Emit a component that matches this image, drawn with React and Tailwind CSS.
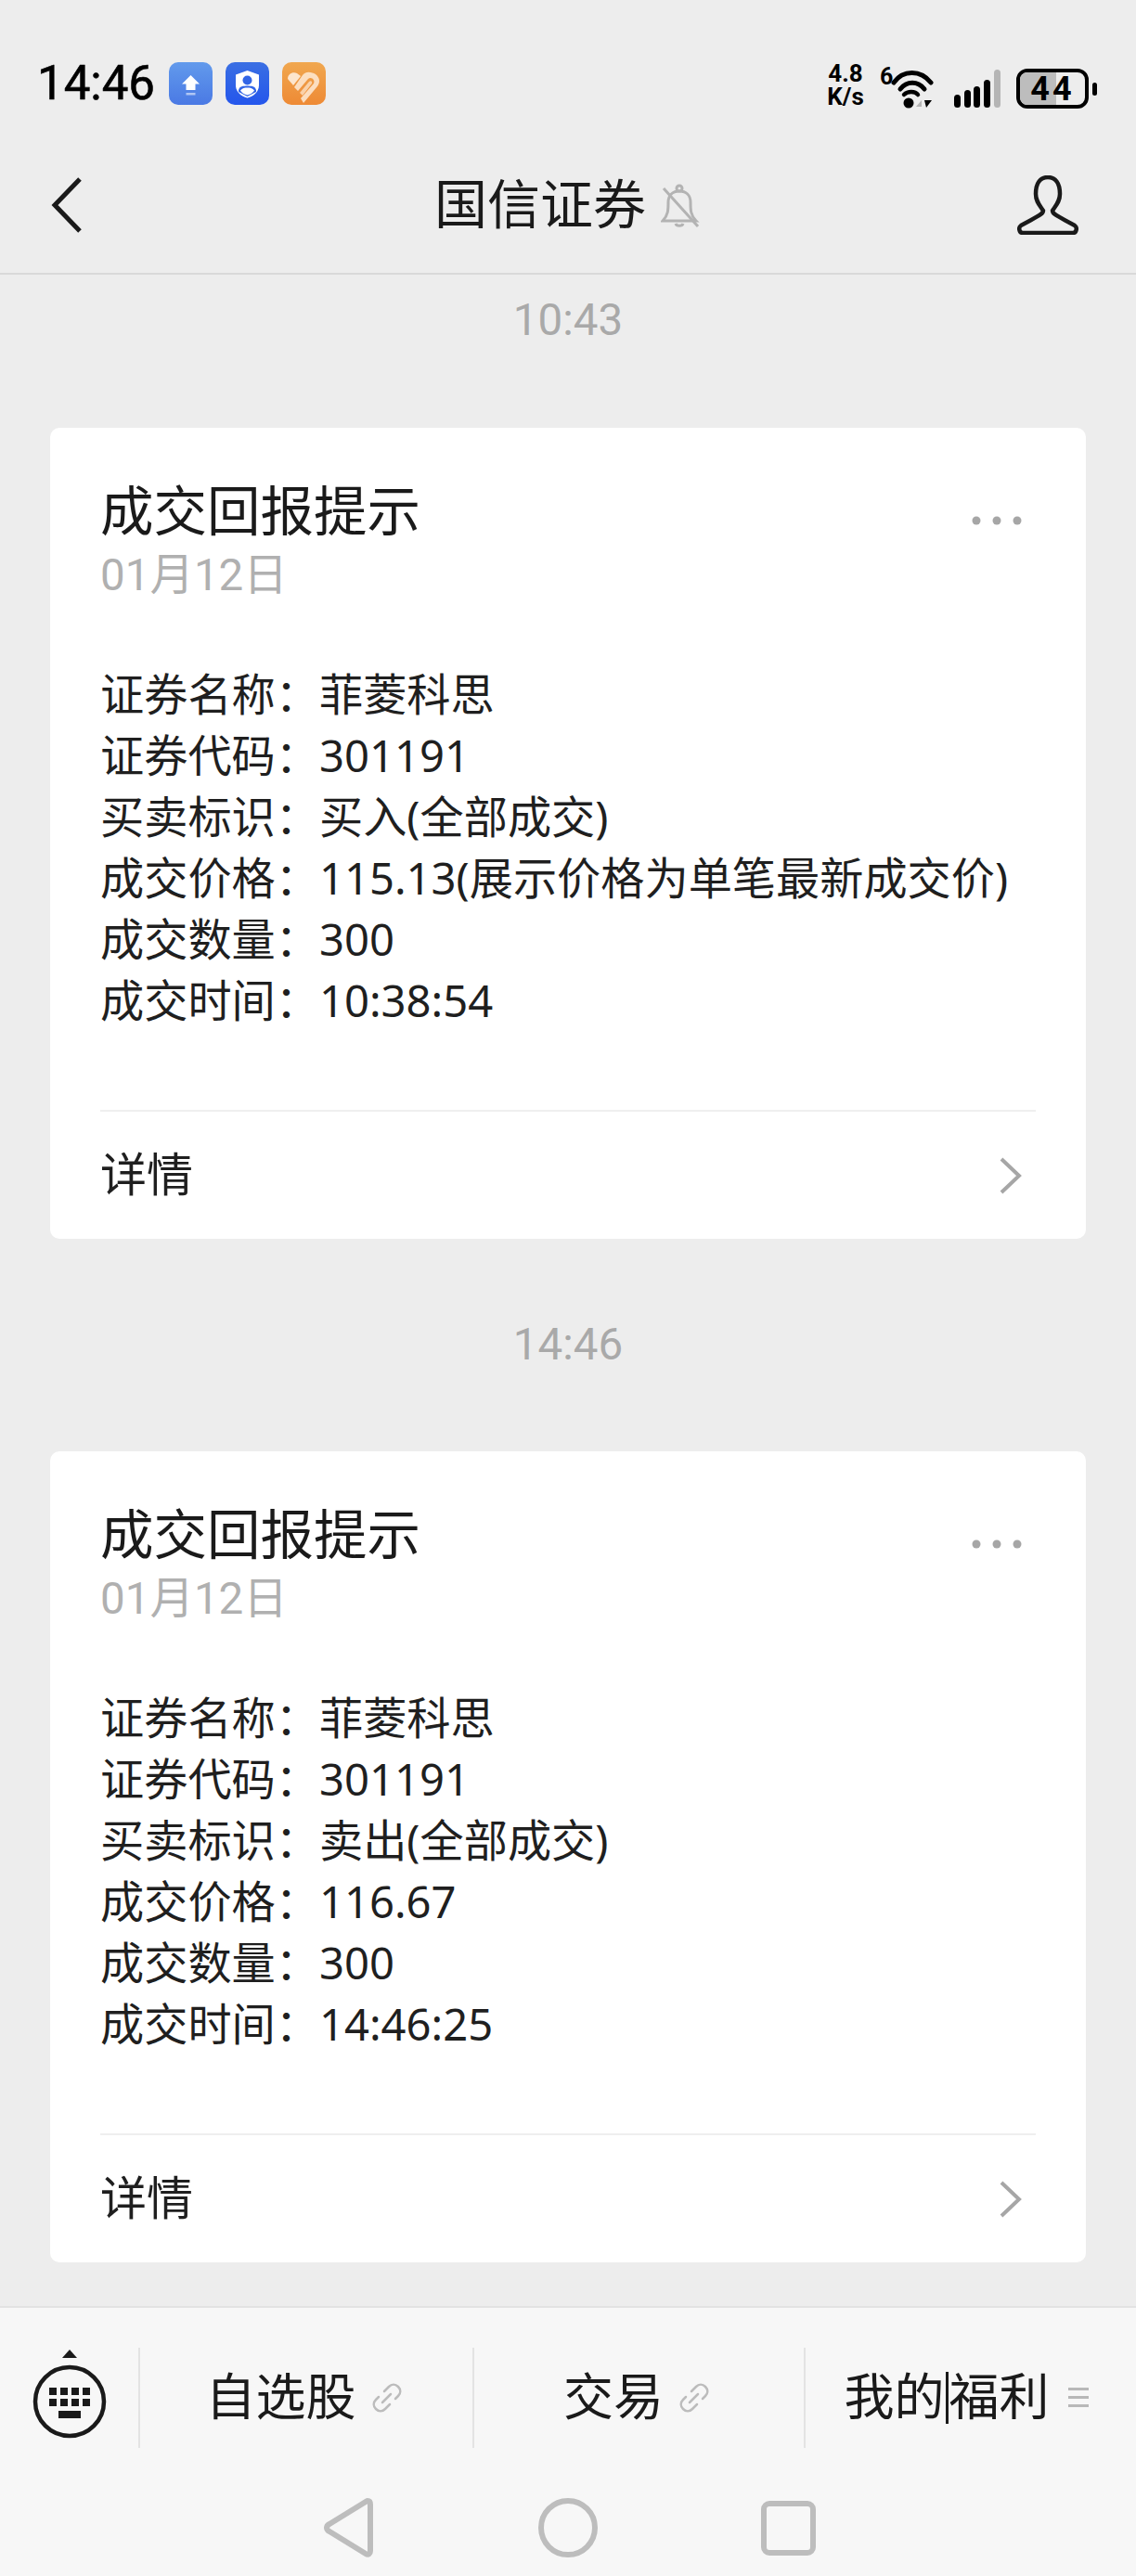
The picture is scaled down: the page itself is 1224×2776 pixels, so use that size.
import React from 'react'

const FONT = "font-['Roboto','Noto_Sans_CJK_SC',sans-serif]"

function UploadBadge() {
  return (
    <svg width="47" height="46" viewBox="0 0 47 46">
      <defs>
        <linearGradient id="up" x1="0" y1="0" x2="0" y2="1">
          <stop offset="0" stopColor="#629aec" />
          <stop offset="1" stopColor="#4a79e4" />
        </linearGradient>
      </defs>
      <rect width="47" height="46" rx="10" fill="url(#up)" />
      <path d="M23.5 14 L33 23.500 H28.500 V30 H18.500 V23.500 H14 Z" fill="#fff" />
      <rect x="18.500" y="33" width="10" height="2.500" fill="#fff" opacity="0.55" />
    </svg>
  )
}

function ShieldBadge() {
  return (
    <svg width="47" height="46" viewBox="0 0 47 46">
      <defs>
        <linearGradient id="sh" x1="0" y1="0" x2="0" y2="1">
          <stop offset="0" stopColor="#3a6fe3" />
          <stop offset="1" stopColor="#2456ec" />
        </linearGradient>
      </defs>
      <rect width="47" height="46" rx="10" fill="url(#sh)" />
      <path d="M23.500 9 L36 13.500 V25 C36 32 30 37 23.500 38.500 C17 37 11 32 11 25 V13.500 Z" fill="#fff" />
      <circle cx="23.500" cy="19.500" r="5" fill="#3265e6" />
      <path d="M14 30 C15 26 19 25.500 23.500 25.500 C28 25.500 32 26 33 30 L33 32 L23.500 37 L14 32 Z" fill="#3265e6" />
      <path d="M16 30.500 C18 28 20.500 27.500 23.500 27.500 C26.500 27.500 29 28 31 30.500 C29.500 33 26.500 34.800 23.500 35.400 C20.500 34.800 17.500 33 16 30.500 Z" fill="#fff" />
    </svg>
  )
}

function HeartBadge() {
  return (
    <svg width="47" height="46" viewBox="0 0 47 46">
      <defs>
        <linearGradient id="he" x1="0" y1="0" x2="0" y2="1">
          <stop offset="0" stopColor="#f0a74f" />
          <stop offset="1" stopColor="#ee8a35" />
        </linearGradient>
      </defs>
      <rect width="47" height="46" rx="10" fill="url(#he)" />
      <path d="M6 18 C6 12 12 10 16 12 L20 15 L12 25 Z" fill="#fde6cd" />
      <path d="M13 27 L22 14 C26 9 32 11 36 13 C41 17 41 22 38 26 L23 44 L20 39 L34 23 C36 19 31 15 28 18 L17 31 Z" fill="#fde6cd" opacity="0.9" />
      <path d="M19 33 L29 21 C31 19 33 21 32 23 L22 36 Z" fill="#fde6cd" opacity="0.75" />
    </svg>
  )
}

function Wifi() {
  return (
    <svg width="46" height="42" viewBox="0 0 46 42" fill="none">
      <path d="M3 14 C13 0 32 0 43 14" stroke="#000" strokeWidth="5" strokeLinecap="round" />
      <path d="M10 21 C17 12 29 12 36 21" stroke="#000" strokeWidth="5" strokeLinecap="round" />
      <path d="M14 27 C18 23 26 23 29 27" stroke="#000" strokeWidth="4.500" strokeLinecap="round" />
      <circle cx="19" cy="36" r="5.500" fill="#000" />
      <path d="M27 40 L33 33 V40 Z" fill="#b5b5b5" />
      <path d="M36 33 L44 33 L38 41 Z" fill="#000" />
    </svg>
  )
}

function Signal() {
  return (
    <svg width="52" height="42" viewBox="0 0 52 42">
      <rect x="1" y="27" width="7" height="14" rx="3.500" fill="#000" />
      <rect x="12" y="22" width="7" height="19" rx="3.500" fill="#000" />
      <rect x="22" y="18" width="7" height="23" rx="3.500" fill="#000" />
      <rect x="33" y="11" width="7" height="30" rx="3.500" fill="#000" />
      <rect x="44" y="0" width="7" height="41" rx="3.500" fill="#b5b5b5" />
    </svg>
  )
}

function Battery() {
  return (
    <div className="flex items-center gap-[4px]">
      <div className="relative h-[43px] w-[78px] rounded-[12px] border-[4px] border-black overflow-hidden">
        <div className="h-full w-[39px] bg-[#bdbdbd]" />
        <span className="absolute inset-0 flex items-center justify-center text-[36px] font-bold tracking-[3px] text-black leading-none">44</span>
      </div>
      <div className="h-[14px] w-[5px] rounded-full bg-black" />
    </div>
  )
}

function StatusBar() {
  return (
    <div className="h-[130px] flex items-start justify-between pt-[67px]">
      <div className="flex items-center pl-[40px]">
        <span className="text-[51px] leading-[46px] font-normal text-black w-[142px] [-webkit-text-stroke:0.6px_#000]">14:46</span>
        <div className="flex gap-[14px]">
          <UploadBadge />
          <ShieldBadge />
          <HeartBadge />
        </div>
      </div>
      <div className="flex items-end pr-[42px]">
        <div className="flex flex-col items-center text-[26px] leading-[25px] font-bold text-black mr-[16px] w-[42px]">
          <span>4.8</span>
          <span>K/s</span>
        </div>
        <div className="flex items-start">
          <span className="text-[25px] leading-[22px] font-bold text-black w-[12px]">6</span>
          <div className="pt-[3px]"><Wifi /></div>
        </div>
        <div className="ml-[21px] mr-[16px]"><Signal /></div>
        <Battery />
      </div>
    </div>
  )
}

function NavBar() {
  return (
    <div className="relative h-[166px] border-b-2 border-[#d9d9d9] flex items-center justify-between pl-[55px] pr-[62px] pt-[18px]">
      <svg width="34" height="60" viewBox="0 0 34 60" fill="none">
        <path d="M31 2 L4 30 L31 58" stroke="#1a1a1a" strokeWidth="5" />
      </svg>
      <div className="absolute left-[468px] top-[59px] flex items-center">
        <span className="text-[57px] leading-[66px] text-[#1a1a1a]">国信证券</span>
        <svg className="ml-[16px]" width="42" height="48" viewBox="0 0 42 48" fill="none" stroke="#b3b3b3" strokeWidth="3">
          <path d="M2 40 C8 34 8 28 8 20 C8 12 13 8 20 8 C27 8 32 12 32 20 C32 28 32 34 38 40 Z" />
          <circle cx="20" cy="5" r="3" />
          <path d="M16 43 C17 46 23 46 24 43" />
          <path d="M3 5 L40 46" />
        </svg>
      </div>
      <svg width="66" height="64" viewBox="0 0 66 64" fill="none">
        <path d="M20 20 C20 8 25 2 33 2 C41 2 46 8 46 20 C46 28 42 32 38 38 C38 42 44 44 62 54 C65 56 64 62 60 62 H6 C2 62 1 56 4 54 C22 44 28 42 28 38 C24 32 20 28 20 20 Z" stroke="#1a1a1a" strokeWidth="4.500" strokeLinejoin="round" />
      </svg>
    </div>
  )
}

function Card({ rows }) {
  return (
    <div className="bg-white rounded-[10px] h-[874px] mx-[54px] px-[54px]">
      <div className="pt-[59px] flex justify-between">
        <span className="text-[57.500px] leading-[66px] text-[#1a1a1a]">成交回报提示</span>
        <svg className="mt-[36px] mr-[14px]" width="55" height="10" viewBox="0 0 55 10" fill="#a6a6a6">
          <circle cx="5" cy="5" r="4.500" />
          <circle cx="27" cy="5" r="4.500" />
          <circle cx="49" cy="5" r="4.500" />
        </svg>
      </div>
      <p className="mt-[1px] text-[47.500px] leading-[66px] text-[#b0b0b0]">01月12日</p>
      <div className="mt-[62px] text-[47.200px] leading-[66px] text-[#1f1f1f] whitespace-nowrap">
        {rows.map(r => (
          <p key={r[0]} className="h-[66px]">{r[0]}：<span className="font-['Noto_Sans','Noto_Sans_CJK_SC',sans-serif]">{r[1]}</span></p>
        ))}
      </div>
      <div className="mt-[85px] h-[139px] border-t-2 border-[#efefef] flex items-center justify-between">
        <span className="text-[50px] pt-[2px] text-[#1f1f1f]">详情</span>
        <svg className="mr-[14px]" width="26" height="42" viewBox="0 0 26 42" fill="none">
          <path d="M3 3 L22 21 L3 39" stroke="#a6a6a6" strokeWidth="4" />
        </svg>
      </div>
    </div>
  )
}

function LinkIcon() {
  return (
    <svg width="32" height="32" viewBox="0 0 32 32" fill="none" stroke="#bcbcbc" strokeWidth="2.500" strokeLinecap="round">
      <path d="M13 9 L18 4 C21 1 25 1 28 4 C31 7 31 11 28 14 L25 17" />
      <path d="M19 12 L10 21" transform="translate(1 0)" />
      <path d="M19 23 L14 28 C11 31 7 31 4 28 C1 25 1 21 4 18 L7 15" />
    </svg>
  )
}

function Tab({ className, children }) {
  return (
    <div className={`border-l-2 border-[#e3e3e3] flex items-center justify-center text-[54px] text-[#1a1a1a] ${className}`}>
      {children}
    </div>
  )
}

function BottomBar() {
  return (
    <div className="h-[291px] bg-[#f7f7f7] border-t-2 border-[#e2e2e2]">
      <div className="mt-[43px] h-[108px] flex">
        <div className="w-[149px] pl-[35px] pt-[2px]">
          <svg width="80" height="96" viewBox="0 0 80 96">
            <path d="M32 9 L40 0 L48 9 Z" fill="#1a1a1a" />
            <circle cx="40" cy="56" r="37" fill="none" stroke="#1a1a1a" strokeWidth="4.500" />
            {[0, 1].map(r => [0, 1, 2, 3].map(c => (
              <rect key={`${r}${c}`} x={18 + c * 12} y={41 + r * 12} width="8" height="8" fill="#1a1a1a" />
            )))}
            <rect x="28" y="66" width="24" height="8" fill="#1a1a1a" />
          </svg>
        </div>
        <Tab className="w-[360px] gap-[17px] pr-[6px]">
          <span>自选股</span>
          <LinkIcon />
        </Tab>
        <Tab className="w-[357px] gap-[17px] pr-[6px]">
          <span>交易</span>
          <LinkIcon />
        </Tab>
        <Tab className="flex-1 gap-[20px] pr-[10px]">
          <span className="flex items-center">
            我的<span className="w-[3px] h-[56px] bg-[#1a1a1a] mx-[1px]" />福利
          </span>
          <svg width="22" height="22" viewBox="0 0 22 22" fill="#b8b8b8">
            <rect y="0" width="22" height="3" />
            <rect y="9" width="22" height="3" />
            <rect y="18" width="22" height="3" />
          </svg>
        </Tab>
      </div>
      <div className="mt-[53px] pl-[348px] flex items-center">
        <svg width="54" height="66" viewBox="0 0 54 66" fill="none">
          <path d="M48 4 C50 4 51 5 51 8 V58 C51 61 49 63 46 61 L7 37 C3 35 3 31 7 29 L46 5 Z" stroke="#bdbdbd" strokeWidth="6" strokeLinejoin="round" />
        </svg>
        <div className="ml-[178px] w-[64px] h-[64px] rounded-full border-[6px] border-[#bdbdbd]" />
        <div className="ml-[176px] w-[59px] h-[59px] rounded-[9px] border-[6px] border-[#bdbdbd]" />
      </div>
    </div>
  )
}

const buyRows = [
  ['证券名称', '菲菱科思'],
  ['证券代码', '301191'],
  ['买卖标识', '买入(全部成交)'],
  ['成交价格', '115.13(展示价格为单笔最新成交价)'],
  ['成交数量', '300'],
  ['成交时间', '10:38:54'],
]

const sellRows = [
  ['证券名称', '菲菱科思'],
  ['证券代码', '301191'],
  ['买卖标识', '卖出(全部成交)'],
  ['成交价格', '116.67'],
  ['成交数量', '300'],
  ['成交时间', '14:46:25'],
]

function TimeLabel({ children, className = '' }) {
  return (
    <div className={`h-[98px] pt-[2px] flex items-center justify-center text-[47.500px] text-[#a9a9a9] ${className}`}>
      {children}
    </div>
  )
}

export default function App() {
  return (
    <div className={`w-[1224px] h-[2776px] bg-[#ededed] flex flex-col overflow-hidden ${FONT}`}>
      <StatusBar />
      <NavBar />
      <div className="flex-1">
        <TimeLabel className="mb-[67px]">10:43</TimeLabel>
        <Card rows={buyRows} />
        <TimeLabel className="mt-[65px] mb-[66px]">14:46</TimeLabel>
        <Card rows={sellRows} />
      </div>
      <BottomBar />
    </div>
  )
}
